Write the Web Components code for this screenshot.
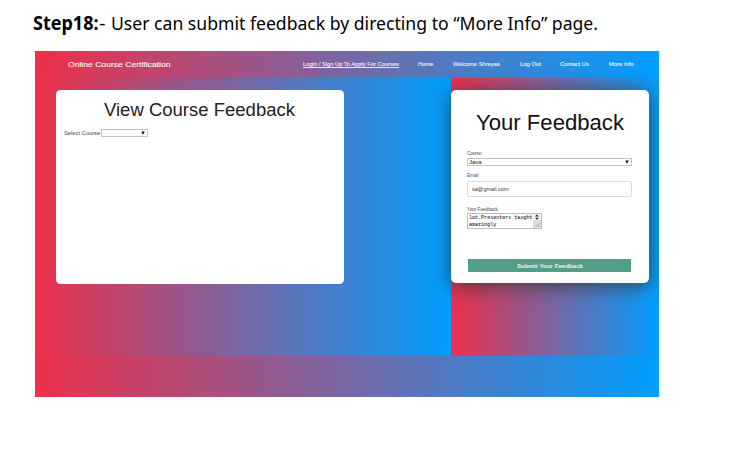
<!DOCTYPE html>
<html lang="en">
<head>
<meta charset="utf-8">
<title>Course feedback</title>
<style>
body{margin:0;background:#fff;font-family:"Liberation Sans",Arial,sans-serif}
</style>
</head>
<body>
<feedback-document></feedback-document>
<script>
const define = (name, html, ready) => customElements.define(name, class extends HTMLElement {
  connectedCallback() {
    if (!this.shadowRoot) {
      const t = document.createElement('template');
      t.innerHTML = html;
      this.attachShadow({mode: 'open'}).append(t.content.cloneNode(true));
    }
    if (ready) ready(this);
  }
});

// One line of text, condensed or expanded horizontally to the width in "w".
define('fit-text', `<style>
:host{display:block;white-space:nowrap;flex:none;overflow:visible}
span{display:inline-block;transform-origin:0 50%;text-decoration:inherit;text-underline-offset:inherit;vertical-align:top}
</style><span><slot></slot></span>`, el => {
  const w = +el.getAttribute('w');
  const s = el.shadowRoot.querySelector('span');
  el.style.width = w + 'px';
  s.style.transform = `scaleX(${w / s.getBoundingClientRect().width})`;
});

define('step-caption', `<style>
:host{display:flex;height:51px;padding:11px 0 0 33px;box-sizing:border-box;font:18.2px/24px "Noto Sans","Open Sans",sans-serif;color:#000}
b{display:block;font-weight:700;font-size:18.8px}
.s{margin-right:5.5px}
</style><b><fit-text w="65.5"><slot name="step"></slot></fit-text></b><fit-text class="s" w="6.5">-</fit-text><fit-text w="487"><slot></slot></fit-text>`);

define('site-nav', `<style>
:host{display:flex;height:26.5px;box-sizing:border-box;padding:0 26px 0 33px;align-items:center;color:#fff;font-size:6.2px;line-height:8px}
.brand{font-size:8px;line-height:10px;margin-right:132.5px;padding-top:1px;opacity:.95;-webkit-text-stroke:.12px #fff}
nav{display:flex;gap:19.4px;opacity:.88;-webkit-text-stroke:.12px #fff}
.u{text-decoration:underline;text-underline-offset:.6px}
</style>
<fit-text class="brand" w="102.5">Online Course Certification</fit-text>
<nav><fit-text class="u" w="96">Login / Sign Up To Apply For Courses</fit-text><fit-text w="15.6">Home</fit-text><fit-text w="47">Welcome Shreyas</fit-text><fit-text w="21">Log Out</fit-text><fit-text w="29">Contact Us</fit-text><fit-text w="24.6">More Info</fit-text></nav>`);

define('drop-down', `<style>
:host{display:flex;box-sizing:border-box;height:7.6px;border:1px solid #c4c4c4;align-items:center;justify-content:space-between;background:#fff;padding:0 1.6px 0 1px;font-size:6px;line-height:6px;color:#222}
svg{width:4px;height:4px;display:block;margin-left:auto}
</style><slot></slot><svg viewBox="0 0 4 4"><path d="M.2.4h3.6L2 3.7z" fill="#111"/></svg>`);

define('course-view', `<style>
:host{display:block;box-sizing:border-box;width:288px;height:193.6px;background:#fff;border-radius:4.5px;padding:9px 8.4px}
h1{margin:0 0 0 40px;font-size:18.7px;line-height:22px;font-weight:400;color:#222}
.row{display:flex;align-items:center;margin-top:8px;gap:1.3px;font-size:5.8px;line-height:8px;color:#444}
drop-down{width:46.5px}
</style><h1><fit-text w="191">View Course Feedback</fit-text></h1>
<div class="row"><fit-text w="36.2">Select Course</fit-text><drop-down></drop-down></div>`);

define('text-area', `<style>
:host{display:flex;box-sizing:border-box;width:75px;height:16px;border:1px solid #bdbdbd;background:#fff;font:5.8px/6.4px "Liberation Mono","Courier New",monospace;color:#333;padding-left:1px;justify-content:space-between}
.t{padding-top:1px;-webkit-text-stroke:.1px #333}
svg{width:8px;height:14px;display:block}
</style><div class="t"><fit-text w="63.5">lot.Presenters taught</fit-text><fit-text w="27.3">amazingly</fit-text></div>
<svg viewBox="0 0 8 14"><path d="M0 0h8v6H0z" fill="#f2f2f2"/><path d="M0 6h8v8H0z" fill="#dcdcdc"/><path d="M2.2 2.6L4 .6l1.8 2zM2.2 3.8L4 5.8l1.8-2z" fill="#222"/><path d="M3 12.8l4-4M5.3 12.8l1.8-1.8" stroke="#888" stroke-width=".6"/></svg>`);

define('feedback-form', `<style>
:host{display:flex;flex-direction:column;box-sizing:border-box;width:197.5px;height:192.6px;background:#fff;border-radius:5px;padding:19px 16.5px 0 16.2px;box-shadow:0 3px 19px rgba(50,50,50,.8);color:#444}
h1{margin:0 0 0 8.6px;font-size:22.6px;line-height:28px;font-weight:400;color:#111}
.l{font-size:4.9px;line-height:6px}
.in{box-sizing:border-box;height:16px;border:1px solid #dadcdf;border-radius:2px;padding:3.5px 4px;font-size:6.1px;line-height:7px;color:#333}
button{display:flex;justify-content:center;align-items:center;border:0;border-radius:0;padding:0;margin:29.7px 1px 0;height:13px;background:#529f89;color:#eaf5f1;font:bold 6.2px/8px "Liberation Sans",Arial,sans-serif}
</style>
<h1><fit-text w="148">Your Feedback</fit-text></h1>
<fit-text class="l" w="15.5" style="margin-top:13.5px">Course:</fit-text>
<drop-down style="margin-top:1.5px"><fit-text w="12.5">Java</fit-text></drop-down>
<fit-text class="l" w="11.6" style="margin-top:7.3px">Email</fit-text>
<div class="in" style="margin-top:2px"><fit-text w="36.5">sa@gmail.com</fit-text></div>
<fit-text class="l" w="33.5" style="margin-top:9.8px">Your Feedback :</fit-text>
<text-area style="margin-top:.7px"></text-area>
<button><fit-text w="66">Submit Your Feedback</fit-text></button>`);

define('course-site', `<style>
:host{display:block;width:624px;height:346px;margin-left:35px;overflow:hidden;background:linear-gradient(to right,#ee2f4a,#009fff)}
main{display:grid;grid-template-columns:416px 208px;height:278.5px}
section{background:linear-gradient(to right,#ee2f4a,#009fff);padding-top:12.5px}
.a{padding-left:20.5px}
</style><site-nav></site-nav>
<main><section class="a"><course-view></course-view></section><section><feedback-form></feedback-form></section></main>`);

define('feedback-document', `<style>:host{display:block;width:740px;height:456px;overflow:hidden}</style>
<step-caption><span slot="step">Step18:</span>User can submit feedback by directing to “More Info” page.</step-caption>
<course-site></course-site>`);

// Parents can upgrade before their text is measurable, so measure once more.
function refit(root) {
  root.querySelectorAll('*').forEach(e => {
    if (e.localName === 'fit-text') {
      const s = e.shadowRoot.querySelector('span');
      s.style.transform = '';
      s.style.transform = `scaleX(${e.getAttribute('w') / s.getBoundingClientRect().width})`;
    }
    if (e.shadowRoot) refit(e.shadowRoot);
  });
}
refit(document);
</script>
</body>
</html>
